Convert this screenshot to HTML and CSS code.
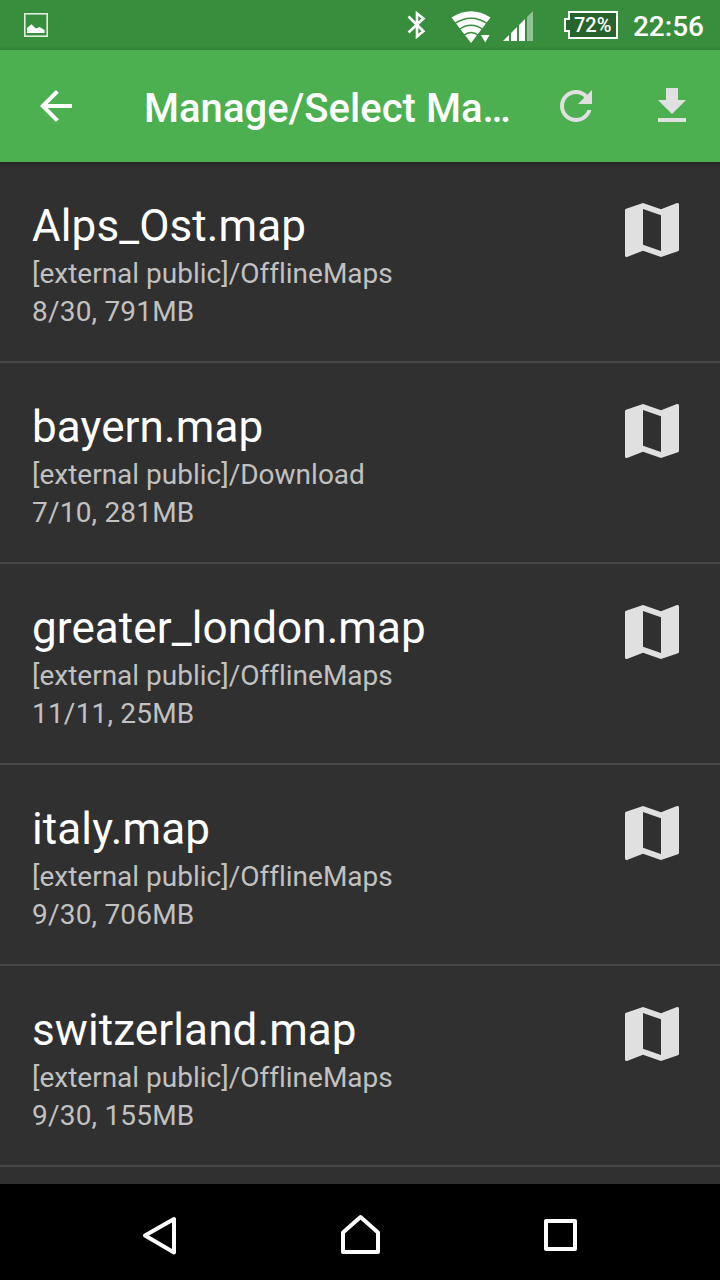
FILE: index.html
```
<!DOCTYPE html>
<html>

<head>
    <meta charset="UTF-8">
    <meta name="viewport" content="width=device-width, initial-scale=1.0">
    <title>Manage/Select Maps</title>
    <link rel="stylesheet" href="styles.css">
</head>

<body>
    <svg class="defs" width="0" height="0">
        <symbol id="map" viewBox="0 0 24 24">
            <path d="M20.5 3l-.16.03L15 5.1 9 3 3.36 4.9c-.21.07-.36.25-.36.48V20.5c0 .28.22.5.5.5l.16-.03L9 18.9l6 2.1 5.64-1.9c.21-.07.36-.25.36-.48V3.5c0-.28-.22-.5-.5-.5zM15 19l-6-2.11V5l6 2.11V19z"/>
        </symbol>
    </svg>

    <div class="status-bar">
        <svg class="picture" width="24" height="24" viewBox="0 0 24 24">
            <rect x="0.8" y="0.8" width="22.4" height="22.4" fill="none" stroke="#e0eee0" stroke-width="1.6"/>
            <path d="M3 20v-5l4.5-3.7 4 3.9h1.5l2.5-1.2 5 3V20z" fill="#fff"/>
        </svg>
        <div class="status-icons">
            <svg width="20" height="30" viewBox="0 0 20 30" fill="none" stroke="#fff" stroke-width="2.6">
                <path d="M1.5 6.5L16.4 21.2 10 26.5V3.5l6.4 5L1.5 22.5"/>
            </svg>
            <svg class="wifi" width="40" height="34" viewBox="0 0 40 34">
                <path d="M0.5 7.5Q20 -5 39.5 7.5L20 33z" fill="#fff"/>
                <path d="M3 14Q20 2.5 37 14M8 19.5Q20 11 32 19.5M12.5 25.5Q20 19.5 27.5 25.5" fill="none" stroke="#388e3c" stroke-width="1.4"/>
                <path d="M28.5 23.5h12v12h-15z" fill="#388e3c"/>
                <path d="M30 25h8.5l-4.3 7.5z" fill="#fff"/>
            </svg>
            <svg class="signal" width="30" height="30" viewBox="0 0 30 30" fill="#fff">
                <path d="M0 30l6-6v6zM8 30V22l6-6v14zM16 30V14l6-6v22z"/>
                <path d="M24 30V6l6-6v30z" opacity=".45"/>
            </svg>
            <div class="battery">
                <svg width="56" height="28" viewBox="0 0 56 28">
                    <path d="M6 1h48v26H6v-7H2V8h4z" fill="#27632a" stroke="#fff" stroke-width="2"/>
                </svg>
                <span class="battery-text">72%</span>
            </div>
            <span class="clock">22:56</span>
        </div>
    </div>

    <div class="toolbar">
        <svg class="back" width="48" height="48" viewBox="0 0 24 24">
            <path d="M20 11H7.83l5.59-5.59L12 4l-8 8 8 8 1.41-1.41L7.83 13H20v-2z"/>
        </svg>
        <h1>Manage/Select Ma…</h1>
        <svg class="action" width="48" height="48" viewBox="0 0 24 24">
            <path d="M17.65 6.35C16.2 4.9 14.21 4 12 4c-4.42 0-7.99 3.58-7.99 8s3.57 8 7.99 8c3.73 0 6.84-2.55 7.73-6h-2.08c-.82 2.33-3.04 4-5.65 4-3.31 0-6-2.69-6-6s2.69-6 6-6c1.66 0 3.14.69 4.22 1.78L13 11h7V4l-2.35 2.35z"/>
        </svg>
        <svg class="action" width="48" height="48" viewBox="0 0 24 24">
            <path d="M19 9h-4V3H9v6H5l7 7 7-7zM5 18v2h14v-2H5z"/>
        </svg>
    </div>

    <div class="list">
        <div class="item">
            <div>
                <h2>Alps_Ost.map</h2>
                <p>[external public]/OfflineMaps</p>
                <p class="size">8/30, 791MB</p>
            </div>
            <svg class="map-icon"><use href="#map"/></svg>
        </div>
        <div class="item">
            <div>
                <h2>bayern.map</h2>
                <p>[external public]/Download</p>
                <p class="size">7/10, 281MB</p>
            </div>
            <svg class="map-icon"><use href="#map"/></svg>
        </div>
        <div class="item">
            <div>
                <h2>greater_london.map</h2>
                <p>[external public]/OfflineMaps</p>
                <p class="size">11/11, 25MB</p>
            </div>
            <svg class="map-icon"><use href="#map"/></svg>
        </div>
        <div class="item">
            <div>
                <h2>italy.map</h2>
                <p>[external public]/OfflineMaps</p>
                <p class="size">9/30, 706MB</p>
            </div>
            <svg class="map-icon"><use href="#map"/></svg>
        </div>
        <div class="item">
            <div>
                <h2>switzerland.map</h2>
                <p>[external public]/OfflineMaps</p>
                <p class="size">9/30, 155MB</p>
            </div>
            <svg class="map-icon"><use href="#map"/></svg>
        </div>
    </div>

    <div class="nav-bar">
        <svg width="200" height="96" viewBox="60 0 200 96">
            <path d="M145 51.5L174 35v33.5z"/>
        </svg>
        <svg width="200" height="96" viewBox="260 0 200 96">
            <path d="M343 68V48.5L360.5 33 378 48.5V68z"/>
        </svg>
        <svg width="200" height="96" viewBox="460 0 200 96">
            <path d="M546 37h29v28h-29z"/>
        </svg>
    </div>
</body>

</html>
```
FILE: styles.css
```
body {
    display: flex;
    flex-direction: column;
    height: 1280px;
    margin: 0;
    overflow: hidden;
    background-color: #303030;
    font-family: Roboto, sans-serif;
    font-variant-ligatures: none;
    color: #fff;
}

h1, h2, p {
    margin: 0;
}

svg {
    display: block;
    flex-shrink: 0;
}

.defs {
    position: absolute;
}

.status-bar {
    display: flex;
    justify-content: space-between;
    box-sizing: border-box;
    height: 50px;
    padding: 0 16px 0 24px;
    background: linear-gradient(#388e3c 46px, #34803a 50px);
    flex-shrink: 0;
}

.picture {
    margin-top: 13px;
}

.status-icons {
    display: flex;
    align-items: flex-start;
    padding-top: 10px;
}

.wifi {
    margin-left: 24px;
}

.signal {
    margin: 1px 0 0 12px;
}

.battery {
    position: relative;
    margin: 1px 0 0 30px;
}

.battery-text {
    position: absolute;
    top: 1px;
    left: 11px;
    font-size: 20px;
    font-weight: 500;
    line-height: 26px;
}

.clock {
    margin-left: 14px;
    padding-top: 1px;
    font-size: 28px;
    font-weight: 500;
    line-height: 32px;
}

.toolbar {
    display: flex;
    align-items: center;
    box-sizing: border-box;
    height: 112px;
    padding-left: 32px;
    background-color: #4caf50;
    flex-shrink: 0;
}

.toolbar h1 {
    width: 384px;
    margin-left: 64px;
    padding-top: 6px;
    font-size: 40px;
    font-weight: 500;
    line-height: 48px;
    letter-spacing: 0.03px;
    white-space: nowrap;
}

.back {
    fill: #fff;
}

.action {
    margin: 0 24px;
    fill: #e0e0e0;
}

.list {
    flex: 1;
    background: linear-gradient(#272727, #303030 6px);
    overflow: hidden;
}

.item {
    display: flex;
    justify-content: space-between;
    box-sizing: border-box;
    height: 201px;
    padding: 32px 32px 0;
    border-bottom: 2px solid #484848;
}

.item h2 {
    padding: 6px 0 3px;
    font-size: 44px;
    font-weight: 400;
    line-height: 52px;
    letter-spacing: 0.1px;
}

.item p {
    font-size: 28px;
    line-height: 38px;
    color: #c1c1c1;
}

.item .size {
    letter-spacing: 0.2px;
}

.map-icon {
    width: 72px;
    height: 72px;
    fill: #e0e0e0;
}

.nav-bar {
    display: flex;
    justify-content: center;
    height: 96px;
    background-color: #000;
    flex-shrink: 0;
}

.nav-bar path {
    fill: none;
    stroke: #fff;
    stroke-width: 4;
    stroke-linejoin: round;
}
```
